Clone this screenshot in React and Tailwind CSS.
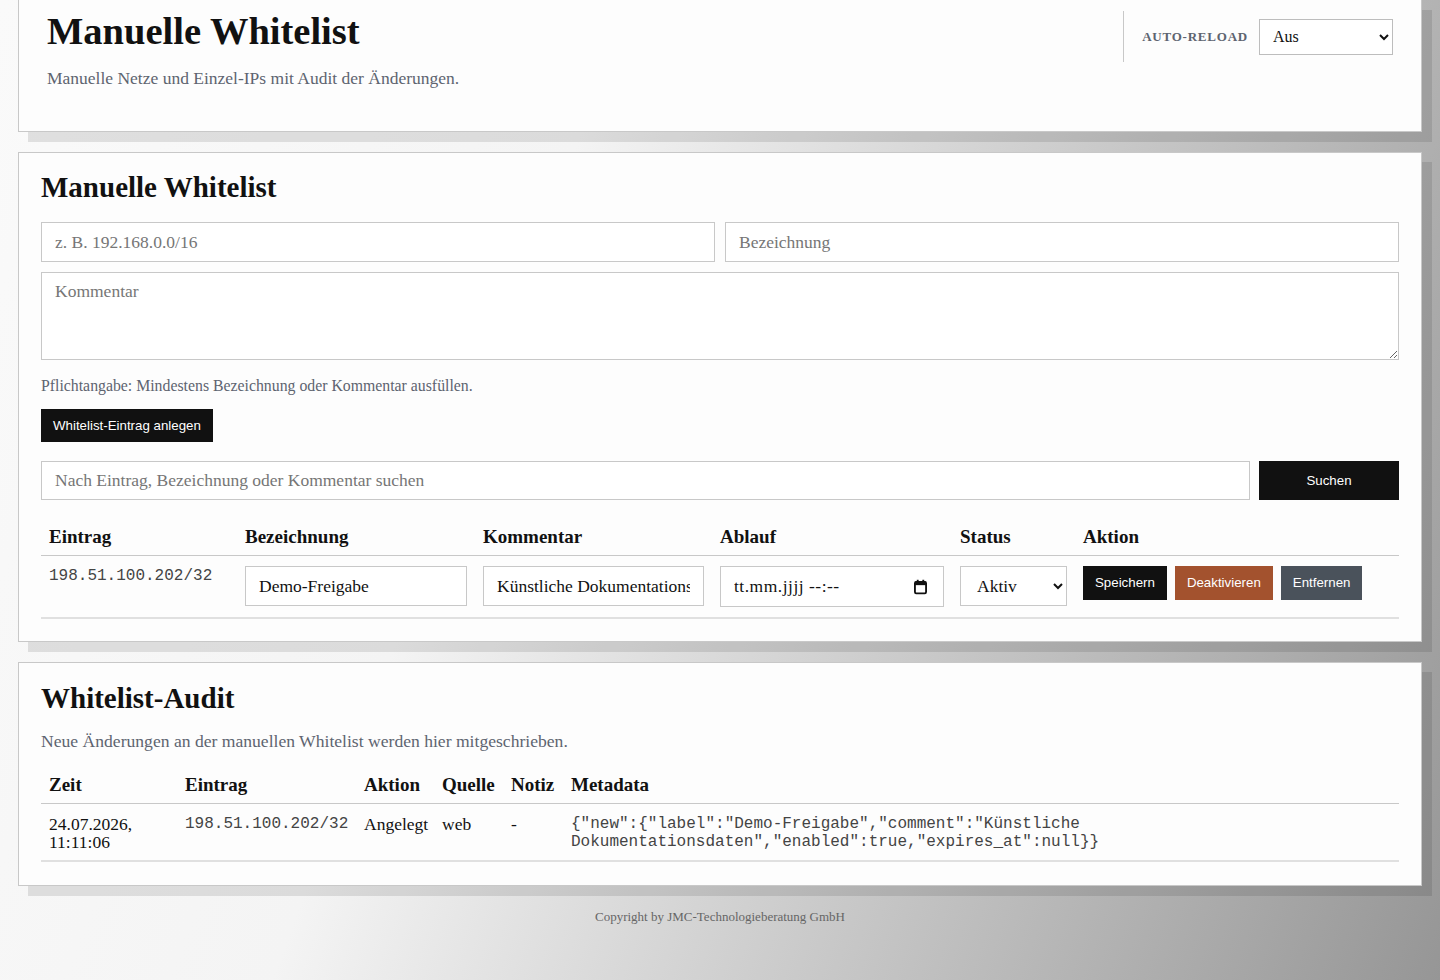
import { useState } from 'react'

const serif = "font-['Liberation_Serif',Georgia,serif]"
const sans = "font-['Liberation_Sans',Arial,sans-serif]"
const mono = "font-['Liberation_Mono','Courier_New',monospace]"

const card = 'bg-[#fdfdfd] border border-[#c8c8c8] shadow-[10px_10px_0_rgba(0,0,0,0.1)]'
const field =
  'h-[40px] w-full border border-[#c8c8c8] bg-white px-[13px] text-[17.5px] text-[#111] placeholder:text-[#767676] outline-none'
const th = 'text-left align-middle font-bold text-[19px] leading-[20px] text-[#111] px-2 pt-[11px] pb-[8px] border-b border-[#c8c8c8]'
const td = 'align-top px-2 pt-[10px] pb-[10px] border-b-2 border-[#e0e0e0]'
const auditTd = 'align-top px-2 pt-[11px] pb-[9px] border-b-2 border-[#e0e0e0]'

function CalendarIcon() {
  return (
    <svg width="13" height="15" viewBox="0 0 14 16" className="text-[#111]">
      <rect x="3" y="0" width="2" height="3" fill="currentColor" />
      <rect x="9" y="0" width="2" height="3" fill="currentColor" />
      <rect x="1" y="2.5" width="12" height="12.5" rx="1.5" stroke="currentColor" strokeWidth="2" fill="none" />
      <rect x="1" y="2" width="12" height="4" fill="currentColor" />
    </svg>
  )
}

export default function App() {
  const [reload, setReload] = useState('aus')
  const [status, setStatus] = useState('aktiv')
  const [label, setLabel] = useState('Demo-Freigabe')
  const [comment, setComment] = useState('Künstliche Dokumentationsdaten')

  return (
    <div
      className={`min-h-screen w-full px-[18px] pb-10 bg-[linear-gradient(110deg,#fafafa_0%,#f4f4f4_35%,#969696_100%)] ${serif}`}
    >
      {/* Page header */}
      <header className={`${card} border-t-0 flex items-start justify-between px-[28px] pt-[9px] pb-[41px]`}>
        <div>
          <h1 className="text-[38.5px] leading-[44px] font-bold text-[#111]">Manuelle Whitelist</h1>
          <p className="mt-[13px] text-[17.5px] leading-[24px] text-[#5d6470]">
            Manuelle Netze und Einzel-IPs mit Audit der Änderungen.
          </p>
        </div>
        <div className="mt-[2px] h-[51px] border-l border-[#c8c8c8] pl-[18px] flex items-center gap-[11px]">
          <span className="text-[13px] font-bold tracking-[0.06em] text-[#5d6470]">AUTO-RELOAD</span>
          <select
            value={reload}
            onChange={(e) => setReload(e.target.value)}
            className="w-[134px] h-[36px] border border-[#bdbdbd] bg-white pl-[9px] pr-1 text-[16px] text-[#111] outline-none"
          >
            <option value="aus">Aus</option>
            <option value="30">30 s</option>
            <option value="60">60 s</option>
          </select>
        </div>
      </header>

      {/* Manual whitelist */}
      <section className={`${card} mt-5 px-[22px] pt-[16px] pb-[22px]`}>
        <h2 className="text-[29px] leading-[36px] font-bold text-[#111]">Manuelle Whitelist</h2>

        <div className="mt-[17px] grid grid-cols-2 gap-[10px]">
          <input className={field} placeholder="z. B. 192.168.0.0/16" />
          <input className={field} placeholder="Bezeichnung" />
        </div>
        <textarea
          className="mt-[10px] block h-[88px] w-full border border-[#c8c8c8] bg-white px-[13px] pt-[6px] text-[17.5px] leading-[24px] text-[#111] placeholder:text-[#767676] outline-none"
          placeholder="Kommentar"
        />
        <p className="mt-[15px] text-[15.8px] leading-[22px] text-[#5d6470]">
          Pflichtangabe: Mindestens Bezeichnung oder Kommentar ausfüllen.
        </p>
        <button className={`mt-[12px] h-[33px] px-3 bg-[#111] text-white text-[13.3px] ${sans}`}>
          Whitelist-Eintrag anlegen
        </button>

        <div className="mt-[19px] flex gap-[9px]">
          <input
            className="h-[39px] flex-1 border border-[#c8c8c8] bg-white px-[13px] text-[17.5px] text-[#111] placeholder:text-[#767676] outline-none"
            placeholder="Nach Eintrag, Bezeichnung oder Kommentar suchen"
          />
          <button className={`h-[39px] w-[140px] bg-[#111] text-white text-[13.3px] ${sans}`}>Suchen</button>
        </div>

        <table className="mt-[16px] w-full table-fixed border-collapse">
          <colgroup>
            <col className="w-[196px]" />
            <col className="w-[238px]" />
            <col className="w-[237px]" />
            <col className="w-[240px]" />
            <col className="w-[123px]" />
            <col className="w-[324px]" />
          </colgroup>
          <thead>
            <tr>
              <th className={th}>Eintrag</th>
              <th className={th}>Bezeichnung</th>
              <th className={th}>Kommentar</th>
              <th className={th}>Ablauf</th>
              <th className={th}>Status</th>
              <th className={th}>Aktion</th>
            </tr>
          </thead>
          <tbody>
            <tr>
              <td className={`${td} text-[16px] leading-[20px] text-[#444] ${mono}`}>198.51.100.202/32</td>
              <td className={td}>
                <input className={field} value={label} onChange={(e) => setLabel(e.target.value)} />
              </td>
              <td className={td}>
                <input className={field} value={comment} onChange={(e) => setComment(e.target.value)} />
              </td>
              <td className={td}>
                <div className="relative">
                  <input readOnly className={`${field} h-[41px] tracking-[0.5px]`} value="tt.mm.jjjj --:--" />
                  <span className="absolute right-[17px] top-1/2 -translate-y-1/2 flex">
                    <CalendarIcon />
                  </span>
                </div>
              </td>
              <td className={td}>
                <select
                  value={status}
                  onChange={(e) => setStatus(e.target.value)}
                  className="h-[40px] w-full border border-[#c8c8c8] bg-white pl-[12px] pr-1 text-[17.5px] text-[#111] outline-none"
                >
                  <option value="aktiv">Aktiv</option>
                  <option value="inaktiv">Inaktiv</option>
                </select>
              </td>
              <td className={td}>
                <div className={`flex gap-2 text-[13.3px] text-white ${sans}`}>
                  <button className="h-[34px] px-3 bg-[#111]">Speichern</button>
                  <button className="h-[34px] px-3 bg-[#a3522e]">Deaktivieren</button>
                  <button className="h-[34px] px-3 bg-[#4a525b]">Entfernen</button>
                </div>
              </td>
            </tr>
          </tbody>
        </table>
      </section>

      {/* Audit */}
      <section className={`${card} mt-5 px-[22px] pt-[17px] pb-[23px]`}>
        <h2 className="text-[29px] leading-[36px] font-bold text-[#111]">Whitelist-Audit</h2>
        <p className="mt-[13px] text-[17.6px] leading-[24px] text-[#5d6470]">
          Neue Änderungen an der manuellen Whitelist werden hier mitgeschrieben.
        </p>

        <table className="mt-[11px] w-full table-fixed border-collapse">
          <colgroup>
            <col className="w-[136px]" />
            <col className="w-[179px]" />
            <col className="w-[78px]" />
            <col className="w-[69px]" />
            <col className="w-[60px]" />
            <col className="w-[836px]" />
          </colgroup>
          <thead>
            <tr>
              <th className={th}>Zeit</th>
              <th className={th}>Eintrag</th>
              <th className={th}>Aktion</th>
              <th className={th}>Quelle</th>
              <th className={th}>Notiz</th>
              <th className={th}>Metadata</th>
            </tr>
          </thead>
          <tbody className="text-[17.5px] leading-[18px] text-[#111]">
            <tr>
              <td className={auditTd}>24.07.2026, 11:11:06</td>
              <td className={`${auditTd} text-[16px] text-[#444] ${mono}`}>198.51.100.202/32</td>
              <td className={auditTd}>Angelegt</td>
              <td className={auditTd}>web</td>
              <td className={auditTd}>-</td>
              <td className={`${auditTd} text-[16px] text-[#444] ${mono}`}>
                {'{"new":{"label":"Demo-Freigabe","comment":"Künstliche Dokumentationsdaten","enabled":true,"expires_at":null}}'}
              </td>
            </tr>
          </tbody>
        </table>
      </section>

      <footer className="mt-[21px] text-center text-[13px] leading-[20px] text-[#666]">
        Copyright by JMC-Technologieberatung GmbH
      </footer>
    </div>
  )
}
